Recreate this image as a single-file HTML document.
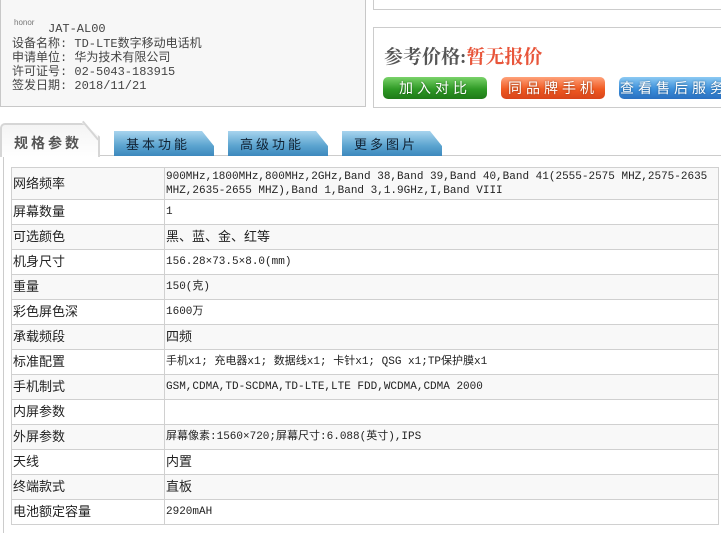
<!DOCTYPE html>
<html><head><meta charset="utf-8"><style>
body{margin:0;width:721px;height:533px;overflow:hidden;background:#fff;font-family:"Liberation Sans","Noto Sans CJK SC","WenQuanYi Zen Hei",sans-serif;position:relative}
.abs{position:absolute}
.info{left:0;top:0;width:366px;height:107px;background:#f7f7f7;border:1px solid #c8c8c8;border-top:none;box-sizing:border-box}
.info div{font-size:12px;color:#444;line-height:15px;position:absolute;left:11px;font-family:"Liberation Mono","WenQuanYi Zen Hei",monospace}
.rtop{left:373px;top:0;width:350px;height:10px;border:1px solid #ccc;border-top:none;box-sizing:border-box}
.price{left:373px;top:27px;width:350px;height:81px;border:1px solid #ccc;box-sizing:border-box}
.btn{position:absolute;top:49px;height:22px;width:104px;border-radius:5px;color:#fff;font-size:14px;letter-spacing:4px;text-align:center;line-height:22px;text-shadow:0 0 2px rgba(0,0,0,.4)}
.tab{position:absolute;top:131px;height:25px;width:100px;background:linear-gradient(#a8d4ee,#5aa3cf 60%,#3d88bd);clip-path:polygon(0 0,88% 0,100% 60%,100% 100%,0 100%);font-size:13px;letter-spacing:3px;color:#123;line-height:27px;text-indent:12px}
table{position:absolute;left:11px;top:167px;width:708px;border-collapse:collapse;font-size:12px}
td{border:1px solid #d0d0d0;height:25px;padding:0 1px;color:#222;font-size:13px;vertical-align:middle;line-height:14px;box-sizing:border-box}
td.v{font-size:11px;font-family:"Liberation Mono","WenQuanYi Zen Hei",monospace}
tr:nth-child(odd) td{background:#f8f8f8}
td:first-child{width:153px}
</style></head><body>
<div class="abs info">
<div style="top:15px;left:13px;font-size:8px;color:#777;font-family:'Liberation Sans',sans-serif">honor</div>
<div style="top:22px;left:47px">JAT-AL00</div>
<div style="top:37px">设备名称: TD-LTE数字移动电话机</div>
<div style="top:51px">申请单位: 华为技术有限公司</div>
<div style="top:65px">许可证号: 02-5043-183915</div>
<div style="top:79px">签发日期: 2018/11/21</div>
</div>
<div class="abs rtop"></div>
<div class="abs price">
<div class="abs" style="left:10px;top:14px;font-size:19px;font-weight:bold;color:#555;font-family:'Liberation Serif','Noto Serif CJK SC',serif">参考价格:<span style="color:#e8553a">暂无报价</span></div>
<div class="btn" style="left:9px;background:linear-gradient(#7ad36a,#2f9a26 55%,#1f7a18)">加入对比</div>
<div class="btn" style="left:127px;background:linear-gradient(#ffa27a,#f05a22 55%,#d8441a)">同品牌手机</div>
<div class="btn" style="left:245px;width:110px;background:linear-gradient(#8ccaf3,#3b8fdb 55%,#2a6fc0)">查看售后服务</div>
</div>
<div class="abs" style="left:0;top:123px;width:100px;height:34px;background:linear-gradient(#f4f4f4,#fff);border:2px solid #d6d6d6;border-bottom:none;border-radius:5px 0 0 0;box-sizing:border-box;clip-path:polygon(0 0,82% 0,100% 40%,100% 100%,0 100%);font-size:14px;font-weight:bold;color:#555;letter-spacing:3px;line-height:36px;text-indent:12px">规格参数</div>
<div class="abs" style="left:82px;top:122px;width:2px;height:24px;background:#d6d6d6;transform:rotate(-40deg);transform-origin:top left"></div>
<div class="abs" style="left:100px;top:155px;width:621px;height:1px;background:#ccc"></div>
<div class="tab" style="left:114px">基本功能</div>
<div class="tab" style="left:228px">高级功能</div>
<div class="tab" style="left:342px">更多图片</div>
<div class="abs" style="left:3px;top:157px;width:1px;height:376px;background:#ccc"></div>
<table>
<tr><td style="height:32px">网络频率</td><td class="v">900MHz,1800MHz,800MHz,2GHz,Band 38,Band 39,Band 40,Band 41(2555-2575 MHZ,2575-2635 MHZ,2635-2655 MHZ),Band 1,Band 3,1.9GHz,I,Band VIII</td></tr>
<tr><td>屏幕数量</td><td class="v">1</td></tr>
<tr><td>可选颜色</td><td>黑、蓝、金、红等</td></tr>
<tr><td>机身尺寸</td><td class="v">156.28×73.5×8.0(mm)</td></tr>
<tr><td>重量</td><td class="v">150(克)</td></tr>
<tr><td>彩色屏色深</td><td class="v">1600万</td></tr>
<tr><td>承载频段</td><td>四频</td></tr>
<tr><td>标准配置</td><td class="v">手机x1; 充电器x1; 数据线x1; 卡针x1; QSG x1;TP保护膜x1</td></tr>
<tr><td>手机制式</td><td class="v">GSM,CDMA,TD-SCDMA,TD-LTE,LTE FDD,WCDMA,CDMA 2000</td></tr>
<tr><td>内屏参数</td><td></td></tr>
<tr><td>外屏参数</td><td class="v">屏幕像素:1560×720;屏幕尺寸:6.088(英寸),IPS</td></tr>
<tr><td>天线</td><td>内置</td></tr>
<tr><td>终端款式</td><td>直板</td></tr>
<tr><td>电池额定容量</td><td class="v">2920mAH</td></tr>
</table>
</body></html>
